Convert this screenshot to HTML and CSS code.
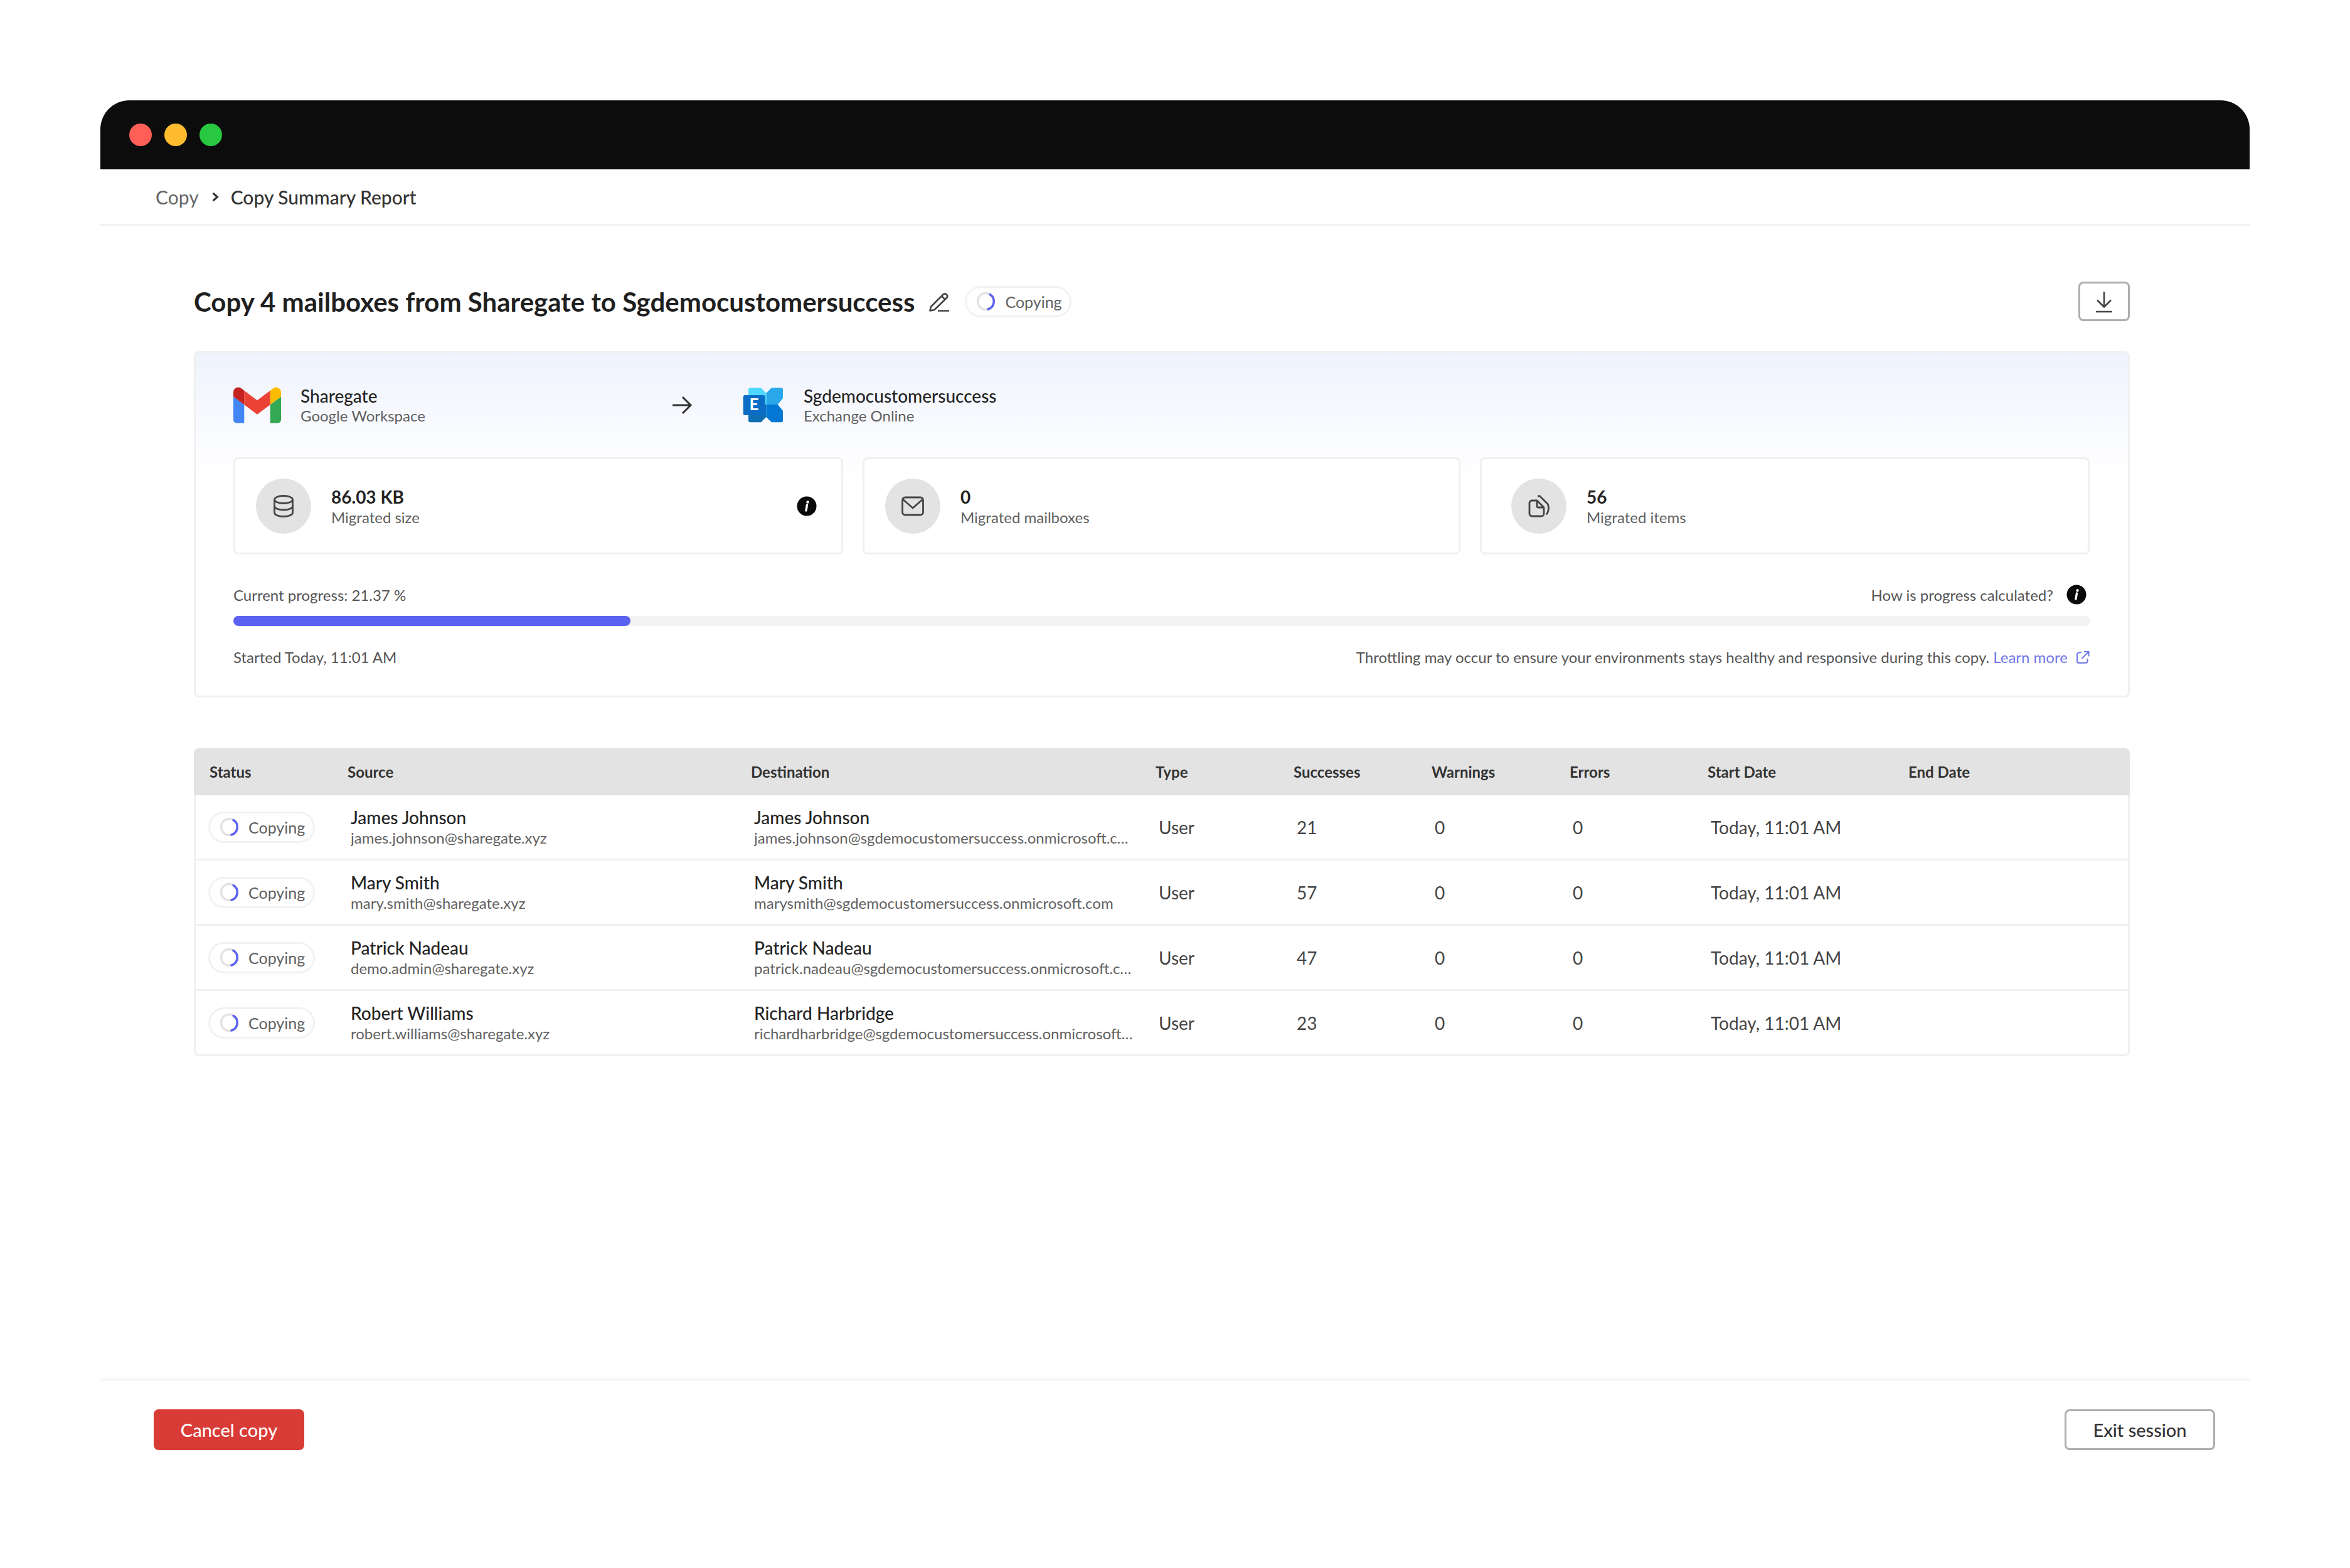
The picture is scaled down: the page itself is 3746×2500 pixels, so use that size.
FILE: index.html
```html
<!DOCTYPE html>
<html lang="en">
    <head>
        <meta charset="UTF-8" />
        <title>Copy Summary Report</title>
        <link rel="stylesheet" href="styles.css">
    </head>
    <body>
        <svg class="sprites" width="0" height="0">
            <symbol id="spinner" viewBox="0 0 33 33">
                <circle cx="16.5" cy="16.5" r="13" fill="none" stroke="#e2e2e2" stroke-width="3.5" />
                <path d="M23 5.5A13 13 0 0 1 20 29" fill="none" stroke="#5b62f0" stroke-width="3.5" stroke-linecap="round" />
            </symbol>
            <symbol id="info" viewBox="0 0 32 32">
                <circle cx="16" cy="16" r="15.5" fill="#0a0a0a" />
                <circle cx="17.5" cy="9.5" r="2.2" fill="#fff" />
                <path d="M16.5 14l-1.6 9" fill="none" stroke="#fff" stroke-width="3.4" stroke-linecap="round" />
            </symbol>
        </svg>

        <div class="window">
            <div class="titlebar">
                <span class="dot dot-red"></span>
                <span class="dot dot-yellow"></span>
                <span class="dot dot-green"></span>
            </div>

            <nav class="breadcrumb">
                <span class="crumb">Copy</span>
                <svg class="crumb-sep" viewBox="0 0 12 16"><path d="M3 2.5L9 8l-6 5.5" fill="none" stroke="#333" stroke-width="2.8" /></svg>
                <span class="crumb-current">Copy Summary Report</span>
            </nav>

            <main class="content">
                <div class="title-row">
                    <h1>Copy 4 mailboxes from Sharegate to Sgdemocustomersuccess</h1>
                    <svg class="edit-icon" viewBox="0 0 38 38">
                        <path d="M6 27L26 7a4 4 0 0 1 5.500 5.500L11.500 32 4.500 33.500z" fill="none" stroke="#444" stroke-width="2.6" stroke-linejoin="round" />
                        <path d="M23 10l5.500 5.500M17 33.500h18" fill="none" stroke="#444" stroke-width="2.6" />
                    </svg>
                    <span class="pill"><svg class="spinner"><use href="#spinner" /></svg>Copying</span>
                    <button class="download-btn">
                        <svg viewBox="0 0 40 40" width="40" height="40">
                            <path d="M20 4v24M9 17.500L20 28.500l11-11M7 36h26" fill="none" stroke="#444" stroke-width="2.6" />
                        </svg>
                    </button>
                </div>

                <section class="summary">
                    <div class="route">
                        <div class="endpoint endpoint-source">
                            <svg class="logo-gmail" viewBox="52 42 88 66">
                                <path fill="#4285f4" d="M58 108h14V74L52 59v43c0 3.320 2.690 6 6 6" />
                                <path fill="#34a853" d="M120 108h14c3.320 0 6-2.690 6-6V59l-20 15" />
                                <path fill="#fbbc04" d="M120 48v26l20-15v-8c0-7.420-8.470-11.650-14.400-7.200" />
                                <path fill="#ea4335" d="M72 74V48l24 18 24-18v26L96 92" />
                                <path fill="#c5221f" d="M52 51v8l20 15V48l-5.600-4.200c-5.940-4.450-14.400-.22-14.400 7.200" />
                            </svg>
                            <div>
                                <div class="endpoint-name">Sharegate</div>
                                <div class="endpoint-type">Google Workspace</div>
                            </div>
                        </div>
                        <svg class="route-arrow" viewBox="0 0 44 44">
                            <path d="M8 22h28M24 9l13 13-13 13" fill="none" stroke="#333" stroke-width="3" />
                        </svg>
                        <div class="endpoint">
                            <svg class="logo-exchange" viewBox="0 0 68 58">
                                <path fill="#28a8ea" d="M46 1.300h15a3 3 0 0 1 3 3V18L55.700 28H37.300V9.700z" />
                                <path fill="#0078d4" d="M37.300 28h18.400L64 38v15.300a3 3 0 0 1-3 3H46L37.300 48z" />
                                <path fill="#50d9ff" d="M12 1.300h17L37.300 9.700V28H9V4.300a3 3 0 0 1 3-3z" />
                                <path fill="#0f6fb5" d="M9 28h28.300v20L29 56.300H12a3 3 0 0 1-3-3z" />
                                <rect x="0.700" y="13" width="35" height="32" rx="3" fill="#0a6cc4" />
                                <text x="18" y="37" class="logo-e">E</text>
                            </svg>
                            <div>
                                <div class="endpoint-name">Sgdemocustomersuccess</div>
                                <div class="endpoint-type">Exchange Online</div>
                            </div>
                        </div>
                    </div>

                    <div class="stats">
                        <div class="stat">
                            <span class="stat-icon">
                                <svg viewBox="0 0 40 40" width="40" height="40">
                                    <ellipse cx="20" cy="9.500" rx="14.500" ry="6" fill="none" stroke="#444" stroke-width="2.8" />
                                    <path d="M5.500 9.500v21c0 3.300 6.500 6 14.500 6s14.500-2.700 14.500-6v-21M5.500 20c0 3.300 6.500 6 14.500 6s14.500-2.700 14.500-6" fill="none" stroke="#444" stroke-width="2.800" />
                                </svg>
                            </span>
                            <div>
                                <div class="stat-value">86.03 KB</div>
                                <div class="stat-label">Migrated size</div>
                            </div>
                            <svg class="stat-info"><use href="#info" /></svg>
                        </div>
                        <div class="stat">
                            <span class="stat-icon">
                                <svg viewBox="0 0 40 40" width="40" height="40">
                                    <rect x="3.500" y="6" width="33" height="28" rx="4.500" fill="none" stroke="#444" stroke-width="2.800" />
                                    <path d="M4 9l16 14L36 9" fill="none" stroke="#444" stroke-width="2.800" />
                                </svg>
                            </span>
                            <div>
                                <div class="stat-value">0</div>
                                <div class="stat-label">Migrated mailboxes</div>
                            </div>
                        </div>
                        <div class="stat stat-items">
                            <span class="stat-icon">
                                <svg viewBox="0 0 40 40" width="40" height="40">
                                    <path d="M5 15a4 4 0 0 1 4-4h8l11 11v10a4 4 0 0 1-4 4H9a4 4 0 0 1-4-4zM17 11v9a2 2 0 0 0 2 2h9" fill="none" stroke="#444" stroke-width="2.800" stroke-linejoin="round" />
                                    <path d="M18 4.500l3-1 13 13c2.500 4 2 12-2 17" fill="none" stroke="#444" stroke-width="2.800" />
                                </svg>
                            </span>
                            <div>
                                <div class="stat-value">56</div>
                                <div class="stat-label">Migrated items</div>
                            </div>
                        </div>
                    </div>

                    <div class="progress-head">
                        <span>Current progress: 21.37 %</span>
                        <span class="progress-help">How is progress calculated? <svg class="help-info"><use href="#info" /></svg></span>
                    </div>
                    <div class="progress-track"><div class="progress-fill" style="width: 21.37%"></div></div>
                    <div class="progress-foot">
                        <span>Started Today, 11:01 AM</span>
                        <span>Throttling may occur to ensure your environments stays healthy and responsive during this copy.
                            <a href="#" class="learn-more">Learn more
                                <svg viewBox="0 0 24 24" width="24" height="24">
                                    <path d="M10 4.500H6a3 3 0 0 0-3 3V18a3 3 0 0 0 3 3h10.500a3 3 0 0 0 3-3v-4M14 3h7.500v7.500M21 3.500L10.500 14" fill="none" stroke="#6f78e8" stroke-width="2" />
                                </svg>
                            </a>
                        </span>
                    </div>
                </section>

                <table class="report">
                    <colgroup>
                        <col class="col-status">
                        <col class="col-source">
                        <col class="col-dest">
                        <col class="col-num">
                        <col class="col-num">
                        <col class="col-num">
                        <col class="col-num">
                        <col class="col-start">
                        <col>
                    </colgroup>
                    <thead>
                        <tr>
                            <th>Status</th>
                            <th>Source</th>
                            <th>Destination</th>
                            <th>Type</th>
                            <th>Successes</th>
                            <th>Warnings</th>
                            <th>Errors</th>
                            <th>Start Date</th>
                            <th>End Date</th>
                        </tr>
                    </thead>
                    <tbody>
                        <tr>
                            <td><span class="pill"><svg class="spinner"><use href="#spinner" /></svg>Copying</span></td>
                            <td><div class="name">James Johnson</div><div class="email">james.johnson@sharegate.xyz</div></td>
                            <td><div class="name">James Johnson</div><div class="email">james.johnson@sgdemocustomersuccess.onmicrosoft.com</div></td>
                            <td>User</td>
                            <td>21</td>
                            <td>0</td>
                            <td>0</td>
                            <td>Today, 11:01 AM</td>
                            <td></td>
                        </tr>
                        <tr>
                            <td><span class="pill"><svg class="spinner"><use href="#spinner" /></svg>Copying</span></td>
                            <td><div class="name">Mary Smith</div><div class="email">mary.smith@sharegate.xyz</div></td>
                            <td><div class="name">Mary Smith</div><div class="email">marysmith@sgdemocustomersuccess.onmicrosoft.com</div></td>
                            <td>User</td>
                            <td>57</td>
                            <td>0</td>
                            <td>0</td>
                            <td>Today, 11:01 AM</td>
                            <td></td>
                        </tr>
                        <tr>
                            <td><span class="pill"><svg class="spinner"><use href="#spinner" /></svg>Copying</span></td>
                            <td><div class="name">Patrick Nadeau</div><div class="email">demo.admin@sharegate.xyz</div></td>
                            <td><div class="name">Patrick Nadeau</div><div class="email">patrick.nadeau@sgdemocustomersuccess.onmicrosoft.com</div></td>
                            <td>User</td>
                            <td>47</td>
                            <td>0</td>
                            <td>0</td>
                            <td>Today, 11:01 AM</td>
                            <td></td>
                        </tr>
                        <tr>
                            <td><span class="pill"><svg class="spinner"><use href="#spinner" /></svg>Copying</span></td>
                            <td><div class="name">Robert Williams</div><div class="email">robert.williams@sharegate.xyz</div></td>
                            <td><div class="name">Richard Harbridge</div><div class="email">richardharbridge@sgdemocustomersuccess.onmicrosoft.com</div></td>
                            <td>User</td>
                            <td>23</td>
                            <td>0</td>
                            <td>0</td>
                            <td>Today, 11:01 AM</td>
                            <td></td>
                        </tr>
                    </tbody>
                </table>
            </main>

            <footer class="actions">
                <button class="btn btn-cancel">Cancel copy</button>
                <button class="btn btn-exit">Exit session</button>
            </footer>
        </div>
    </body>
</html>
```

FILE: styles.css
```css
* {
    box-sizing: border-box;
}

html,
body {
    margin: 0;
    background: #fff;
}

body {
    font-family: "Lato", "Noto Sans", sans-serif;
    color: #242424;
    font-size: 24px;
}

.sprites {
    position: absolute;
}

.window {
    display: flex;
    flex-direction: column;
    height: 2180px;
    margin: 160px 160px 0;
}

.titlebar {
    display: flex;
    align-items: center;
    gap: 20px;
    height: 110px;
    padding-left: 46px;
    background: #0c0c0c;
    border-radius: 46px 46px 0 0;
}

.dot {
    width: 36px;
    height: 36px;
    border-radius: 50%;
}

.dot-red { background: #ff5f57; }
.dot-yellow { background: #febc2e; }
.dot-green { background: #28c840; }

.breadcrumb {
    display: flex;
    align-items: center;
    height: 90px;
    padding-left: 88px;
    border-bottom: 3px solid #f2f2f2;
    font-size: 30px;
}

.crumb {
    color: #666;
}

.crumb-sep {
    width: 14px;
    height: 18px;
    margin: 0 18px 0 19px;
}

.crumb-current {
    font-weight: 500;
    color: #333;
}

.content {
    flex: 1;
    padding: 89px 191px 0 149px;
}

.title-row {
    display: flex;
    align-items: center;
    height: 63px;
}

h1 {
    margin: 0;
    font-size: 42px;
    font-weight: 700;
    color: #1f1f1f;
}

.edit-icon {
    width: 38px;
    height: 38px;
    margin: 0 22px 0 20px;
}

.pill {
    display: inline-flex;
    align-items: center;
    gap: 14px;
    width: 170px;
    height: 50px;
    padding-left: 14px;
    border: 3px solid #f2f2f2;
    border-radius: 25px;
    background: #fff;
    color: #616161;
    font-size: 25px;
}

.spinner {
    width: 33px;
    height: 33px;
    flex: none;
}

.download-btn {
    display: flex;
    align-items: center;
    justify-content: center;
    width: 82px;
    height: 63px;
    margin-left: auto;
    padding: 0;
    background: #fff;
    border: 3px solid #adadad;
    border-radius: 8px;
}

.summary {
    height: 552px;
    margin-top: 48px;
    padding: 53px 60px 0;
    border: 3px solid #f0f0f0;
    border-radius: 8px;
    background: linear-gradient(#eff3fd, #fff 200px);
}

.route {
    display: flex;
    align-items: center;
    height: 60px;
}

.endpoint {
    display: flex;
    align-items: center;
    gap: 31px;
}

.endpoint-source {
    width: 692px;
}

.logo-gmail {
    width: 76px;
    height: 60px;
    flex: none;
}

.logo-exchange {
    width: 68px;
    height: 60px;
    flex: none;
    gap: 0;
    margin-right: -2px;
}

.logo-e {
    fill: #fff;
    font-size: 26px;
    font-weight: 700;
    text-anchor: middle;
}

.route-arrow {
    width: 44px;
    height: 44px;
    margin-right: 76px;
}

.endpoint-name {
    font-size: 28px;
    font-weight: 500;
    line-height: 34px;
}

.endpoint-type {
    color: #616161;
    font-size: 24px;
    line-height: 30px;
}

.stats {
    display: grid;
    grid-template-columns: 972px 953px 972px;
    gap: 31px;
    margin-top: 53px;
}

.stat {
    display: flex;
    align-items: center;
    gap: 32px;
    height: 155px;
    padding: 0 39px 0 33px;
    background: #fff;
    border: 3px solid #f0f0f0;
    border-radius: 8px;
}

.stat-items {
    padding-left: 47px;
}

.stat-icon {
    display: flex;
    align-items: center;
    justify-content: center;
    width: 88px;
    height: 88px;
    flex: none;
    border-radius: 50%;
    background: #e3e3e3;
}

.stat-value {
    font-size: 28px;
    font-weight: 700;
    line-height: 36px;
}

.stat-label {
    color: #616161;
    font-size: 24px;
    line-height: 30px;
}

.stat-info {
    width: 32px;
    height: 32px;
    margin-left: auto;
}

.progress-head,
.progress-foot {
    display: flex;
    justify-content: space-between;
    align-items: center;
    color: #555;
    font-size: 24px;
}

.progress-head {
    height: 36px;
    margin-top: 46px;
}

.progress-help {
    display: flex;
    align-items: center;
    gap: 21px;
    padding-right: 6px;
}

.help-info {
    width: 32px;
    height: 32px;
}

.progress-track {
    height: 16px;
    margin-top: 16px;
    border-radius: 8px;
    background: #f3f3f3;
}

.progress-fill {
    height: 100%;
    border-radius: 8px;
    background: #5b62f0;
}

.progress-foot {
    height: 36px;
    margin-top: 31px;
}

.learn-more {
    color: #6f78e8;
    text-decoration: none;
}

.learn-more svg {
    margin-left: 6px;
    vertical-align: -3px;
}

.report {
    width: 100%;
    margin-top: 81px;
    border-collapse: separate;
    border-spacing: 0;
    table-layout: fixed;
}

.col-status { width: 220px; }
.col-source { width: 643px; }
.col-dest { width: 645px; }
.col-num { width: 220px; }
.col-start { width: 320px; }

.report th {
    height: 75px;
    padding-left: 25px;
    background: #e3e3e3;
    color: #333;
    font-size: 24px;
    font-weight: 700;
    text-align: left;
}

.report th:first-child { border-top-left-radius: 8px; }
.report th:last-child { border-top-right-radius: 8px; }

.report td {
    height: 104px;
    padding: 0 0 0 30px;
    border-bottom: 3px solid #f0f0f0;
    color: #444;
    font-size: 28px;
}

.report td:first-child {
    padding-left: 20px;
    border-left: 3px solid #f0f0f0;
}

.report td:last-child {
    border-right: 3px solid #f0f0f0;
}

.report tr:last-child td:first-child { border-bottom-left-radius: 8px; }
.report tr:last-child td:last-child { border-bottom-right-radius: 8px; }

.name {
    color: #242424;
    font-size: 28px;
    font-weight: 500;
    line-height: 34px;
}

.email {
    max-width: 606px;
    overflow: hidden;
    color: #616161;
    font-size: 24px;
    line-height: 32px;
    text-overflow: ellipsis;
    white-space: nowrap;
}

.actions {
    display: flex;
    justify-content: space-between;
    height: 142px;
    padding: 46px 55px 0 85px;
    border-top: 3px solid #f2f2f2;
}

.btn {
    width: 240px;
    height: 65px;
    font-family: inherit;
    font-size: 29px;
    font-weight: 500;
    border-radius: 8px;
}

.btn-cancel {
    background: #d93b36;
    border: none;
    color: #fff;
}

.btn-exit {
    background: #fff;
    border: 3px solid #adadad;
    color: #333;
}
```
